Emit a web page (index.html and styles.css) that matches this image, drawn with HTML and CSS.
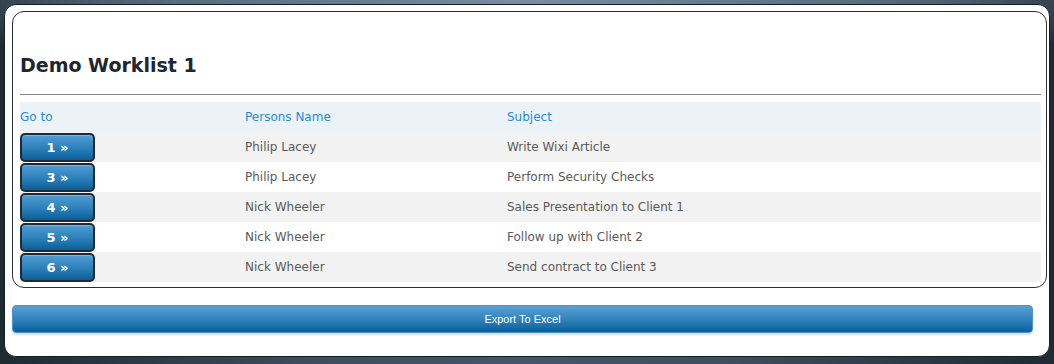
FILE: index.html
```html
<!DOCTYPE html>
<html>
<head>
<meta charset="utf-8">
<link rel="stylesheet" href="styles.css">
</head>
<body>
<div class="panel">
  <div class="box">
    <h1 class="title">Demo Worklist 1</h1>
    <div class="rule"></div>
    <table class="grid">
      <thead>
        <tr><th class="c1">Go to</th><th class="c2">Persons Name</th><th>Subject</th></tr>
      </thead>
      <tbody>
        <tr class="odd"><td><a class="go">1 »</a></td><td>Philip Lacey</td><td>Write Wixi Article</td></tr>
        <tr><td><a class="go">3 »</a></td><td>Philip Lacey</td><td>Perform Security Checks</td></tr>
        <tr class="odd"><td><a class="go">4 »</a></td><td>Nick Wheeler</td><td>Sales Presentation to Client 1</td></tr>
        <tr><td><a class="go">5 »</a></td><td>Nick Wheeler</td><td>Follow up with Client 2</td></tr>
        <tr class="odd"><td><a class="go">6 »</a></td><td>Nick Wheeler</td><td>Send contract to Client 3</td></tr>
      </tbody>
    </table>
  </div>
  <div class="export">Export To Excel</div>
</div>
</body>
</html>
```
FILE: styles.css
```css
html, body { margin: 0; padding: 0; }
body {
  width: 1054px;
  height: 364px;
  overflow: hidden;
  background:
    radial-gradient(ellipse 60% 80px at 50% 0%, #7a8ba3 0%, #5b6b80 55%, rgba(47,59,73,0) 100%),
    linear-gradient(90deg, #1f2a33 0%, #3e4c5e 30%, #45556a 50%, #3e4c5e 70%, #1f2a33 100%);
  background-color: #2c3744;
  padding-top: 4px;
  box-sizing: border-box;
  font-family: "DejaVu Sans", Verdana, sans-serif;
}
.panel {
  margin-left: 4px;
  width: 1046px;
  height: 353px;
  box-sizing: border-box;
  background: #fff;
  border: 1px solid #0f2418;
  border-radius: 12px;
  padding: 6px 2px 0 7px;
}
.box {
  width: 1035px;
  height: 277px;
  box-sizing: border-box;
  border: 1px solid #2a2f33;
  border-radius: 12px;
  padding: 0 5px 0 7px;
}
.title {
  margin: 42px 0 0 0;
  height: 22px;
  line-height: 22px;
  font-size: 19px;
  font-weight: bold;
  color: #1e2631;
}
.rule {
  margin-top: 18px;
  border-top: 1px solid #8a8a8a;
  margin-bottom: 7px;
}
.grid {
  width: 1021px;
  border-collapse: collapse;
  border-spacing: 0;
  font-size: 12px;
}
.grid th, .grid td {
  padding: 0;
  height: 30px;
  text-align: left;
  vertical-align: middle;
  font-weight: normal;
}
.grid th {
  color: #2c8ad3;
  background: #ebf2f8;
}
.grid td { color: #5a5a5a; }
.grid .c1 { width: 225px; }
.grid .c2 { width: 262px; }
.grid tr.odd td { background: #f2f2f2; }
.go {
  display: block;
  width: 75px;
  height: 29px;
  box-sizing: border-box;
  border: 2px solid #1f2833;
  border-radius: 5px;
  background: linear-gradient(#519dd3, #2b7fb9 55%, #0b5d94);
  color: #fff;
  font-weight: bold;
  font-size: 13px;
  line-height: 25px;
  text-align: center;
  box-shadow: inset 0 1px 0 rgba(255,255,255,0.25);
}
.export {
  margin-top: 17px;
  width: 1021px;
  height: 28px;
  box-sizing: border-box;
  border-radius: 4px;
  border: 1px solid #4f93c8;
  background: linear-gradient(#5ba0d4, #2e80bb 55%, #07609a);
  box-shadow: 0 2px 2px #d8dde3;
  color: #fff;
  font-family: "Liberation Sans", Arial, sans-serif;
  font-size: 11px;
  line-height: 26px;
  text-align: center;
}
```
